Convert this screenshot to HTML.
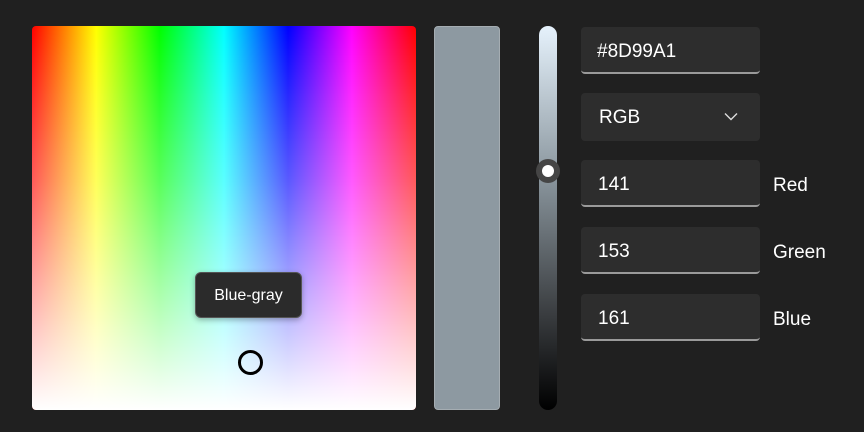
<!DOCTYPE html>
<html><head><style>
body{margin:0;width:864px;height:432px;background:#202020;position:relative;overflow:hidden;font-family:"Segoe UI","Liberation Sans",sans-serif;color:#fff}
.abs{position:absolute}
#spec{left:32px;top:26px;width:384px;height:384px;border-radius:4px;overflow:hidden;
background:linear-gradient(90deg,#f00 0%,#ff0 16.7%,#0f0 33.3%,#0ff 50%,#00f 66.7%,#f0f 83.3%,#f00 100%)}
#spec:after{content:"";position:absolute;inset:0;background:linear-gradient(180deg,rgba(255,255,255,0) 0%,rgba(255,255,255,.35) 40%,rgba(255,255,255,1) 100%)}
#prev{left:434px;top:26px;width:64px;height:382px;background:#8D99A1;border:1px solid #a5adb2;border-radius:4px}
#sl{left:539px;top:26px;width:18px;height:384px;border-radius:9px;background:linear-gradient(180deg,#e6f2fc 0%,#8D99A1 38%,#3a3d40 75%,#000 100%)}
#th{left:536px;top:159px;width:24px;height:24px;border-radius:50%;background:#454545}
#th:after{content:"";position:absolute;left:6px;top:6px;width:12px;height:12px;border-radius:50%;background:#fff}
.box{left:581px;width:179px;height:47px;background:#2d2d2d;border-radius:4px;border-bottom:2px solid #9a9a9a;box-sizing:border-box;font-size:19px;line-height:50px;padding-left:17px}
.lab{left:773px;font-size:19px}
#tip{left:195px;top:272px;width:107px;height:46px;box-sizing:border-box;background:#2b2b2b;border:1px solid #555;border-radius:6px;font-size:16px;line-height:45px;text-align:center;box-shadow:0 2px 6px rgba(0,0,0,.3)}
#ring{left:238px;top:350px;width:19px;height:19px;border:3px solid #000;border-radius:50%}
</style></head><body>
<div id="spec" class="abs"></div>
<div id="tip" class="abs">Blue-gray</div>
<div id="ring" class="abs"></div>
<div id="prev" class="abs"></div>
<div id="sl" class="abs"></div>
<div id="th" class="abs"></div>
<div class="abs box" style="top:27px;padding-left:16px">#8D99A1</div>
<div class="abs box" style="top:93px;border-bottom:none;height:48px;line-height:50px;padding-left:18px">RGB
<svg class="abs" style="left:143px;top:19px" width="14" height="9" viewBox="0 0 14 9"><path d="M1 1.5L7 7.5L13 1.5" stroke="#ddd" stroke-width="1.4" fill="none"/></svg></div>
<div class="abs box" style="top:160px">141</div>
<div class="abs box" style="top:227px">153</div>
<div class="abs box" style="top:294px">161</div>
<div class="abs lab" style="top:175px">Red</div>
<div class="abs lab" style="top:242px">Green</div>
<div class="abs lab" style="top:309px">Blue</div>
</body></html>
